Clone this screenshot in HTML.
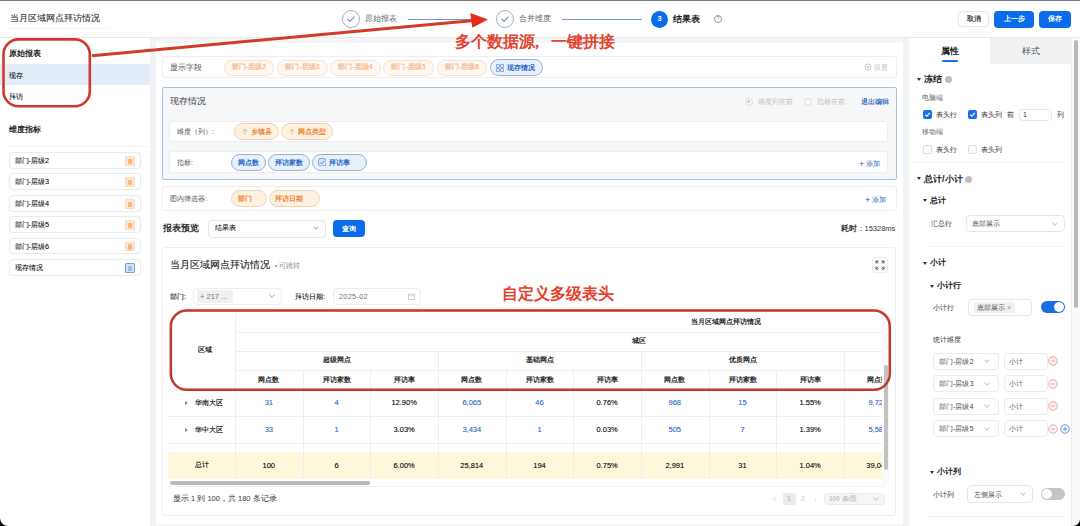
<!DOCTYPE html>
<html><head><meta charset="utf-8">
<style>
*{box-sizing:border-box;margin:0;padding:0}
html,body{width:1080px;height:526px;overflow:hidden;background:#fff}
body{position:relative;font-family:"Liberation Sans",sans-serif;color:#333;font-size:8px;line-height:1}
.a{position:absolute;white-space:nowrap}
.t{position:absolute;white-space:nowrap;line-height:1}
.bar{position:absolute}
.btn{position:absolute;border-radius:4px;color:#fff;font-size:7.4px;display:flex;align-items:center;justify-content:center;font-weight:bold}
.tag{position:absolute;border-radius:9px;display:flex;align-items:center;justify-content:center;font-size:7px;white-space:nowrap}
.tg-o1{background:#fef8f1;border:1px solid #f1e3d6;color:#f4bb90;font-weight:bold;font-size:6.8px}
.tg-o2{background:#fff1e2;border:1px solid #efd3b8;color:#ec883a;font-weight:bold;font-size:7px}
.tg-b{background:#e6f1fd;border:1px solid #9db0c7;color:#2b66c6;font-weight:bold;font-size:7px}
.item{position:absolute;left:9px;width:132px;height:16.5px;border:1px solid #e9ebef;border-radius:4px;background:#fff;box-shadow:0 0 1px rgba(0,0,0,.04)}
.item span{position:absolute;left:4.5px;top:4.3px;font-size:7.3px;color:#2a2a2a;text-shadow:0 0 .5px rgba(0,0,0,.5)}
.item i{position:absolute;right:5.5px;top:3px;width:10px;height:9.5px;background:#fde7d2;border:1px solid #f9dcc0;border-radius:1px}
.item i:after{content:"";position:absolute;left:2px;top:1.5px;width:4.5px;height:5.5px;background:#f3ac70;border-radius:1px;opacity:.8}
.card{position:absolute;border:1px solid #edeef1;border-radius:3px;background:#fff}
.th{position:absolute;font-size:7.1px;font-weight:bold;color:#2a2a2a;text-align:center;line-height:1}
.td{position:absolute;font-size:7.5px;color:#2a2a2a;font-weight:normal;text-shadow:0 0 0.5px rgba(0,0,0,.6);text-align:center;line-height:1}
.td.bl{text-shadow:0 0 0.5px rgba(40,100,190,.7)}
.rn{position:absolute;font-size:7.2px;color:#222;font-weight:normal;text-shadow:0 0 0.5px rgba(0,0,0,.7);white-space:nowrap;line-height:1}
.bl{color:#4a80cc}
.vl{position:absolute;width:1px;background:#eceef1}
.hl{position:absolute;height:1px;background:#eceef1}
.sel{position:absolute;border:1px solid #e4e6ea;border-radius:4px;background:#fff}
.chev{position:absolute;width:4px;height:4px;border-right:1px solid #bbb;border-bottom:1px solid #bbb;transform:rotate(45deg)}
.item i.bi:after{background:#8db2e3}
</style></head><body>

<!-- top dark line -->
<div class="bar" style="left:0;top:0;width:1080px;height:1px;background:#7a7a7a"></div>

<!-- ================= HEADER ================= -->
<div class="t" style="left:9.5px;top:14px;font-size:9px;color:#444;text-shadow:0 0 .4px rgba(0,0,0,.4)">当月区域网点拜访情况</div>
<div class="bar" style="left:8px;top:28px;width:102px;height:1px;background:#f5f5f5"></div>
<div class="bar" style="left:0;top:37px;width:1080px;height:1px;background:#e9e9e9"></div>


<!-- steps -->
<div class="bar" style="left:342px;top:10px;width:18px;height:18px;border:1px solid #9fb3cc;border-radius:50%"></div>
<svg class="a" style="left:345px;top:13px" width="12" height="12" viewBox="0 0 12 12"><path d="M2.6 6 L5 8.4 L9.4 3.6" fill="none" stroke="#7893b5" stroke-width="1.2"/></svg>
<div class="t" style="left:365px;top:15px;font-size:8.2px;color:#666">原始报表</div>
<div class="bar" style="left:408px;top:19px;width:76px;height:1px;background:#7b98bf"></div>
<div class="bar" style="left:496px;top:10px;width:18px;height:18px;border:1px solid #9fb3cc;border-radius:50%"></div>
<svg class="a" style="left:499px;top:13px" width="12" height="12" viewBox="0 0 12 12"><path d="M2.6 6 L5 8.4 L9.4 3.6" fill="none" stroke="#7893b5" stroke-width="1.2"/></svg>
<div class="t" style="left:519px;top:15px;font-size:8.2px;color:#666">合并维度</div>
<div class="bar" style="left:562px;top:19px;width:80px;height:1px;background:#7b98bf"></div>
<div class="bar" style="left:651px;top:10.5px;width:17px;height:17px;background:#0a6cea;border-radius:50%;color:#fff;font-size:7.5px;font-weight:bold;display:flex;align-items:center;justify-content:center">3</div>
<div class="t" style="left:673px;top:14.5px;font-size:9px;font-weight:bold;color:#222">结果表</div>
<div class="bar" style="left:714px;top:15px;width:8px;height:8px;border:1px solid #999;border-radius:50%;font-size:5.5px;color:#888;display:flex;align-items:center;justify-content:center">?</div>

<!-- buttons -->
<div class="btn" style="left:958px;top:11px;width:31px;height:16px;background:#fff;border:1px solid #e8e8e8;color:#444;box-shadow:0 0 2px rgba(0,0,0,.06)">取消</div>
<div class="btn" style="left:994px;top:10.5px;width:40px;height:17px;background:#0a6cea">上一步</div>
<div class="btn" style="left:1039px;top:10.5px;width:32px;height:17px;background:#0a6cea">保存</div>

<!-- ================= LEFT PANEL ================= -->
<div class="bar" style="left:150px;top:38px;width:6px;height:488px;background:#f2f3f5"></div>
<div class="t" style="left:9px;top:49.5px;font-size:7.6px;font-weight:bold;color:#222">原始报表</div>
<div class="bar" style="left:0;top:64px;width:150px;height:21px;background:#e3ecf9"></div>
<div class="t" style="left:9px;top:72px;font-size:7.2px;color:#2a2a2a;text-shadow:0 0 .5px rgba(0,0,0,.5)">现存</div>
<div class="t" style="left:9px;top:93px;font-size:7.2px;color:#2a2a2a;text-shadow:0 0 .5px rgba(0,0,0,.5)">拜访</div>

<div class="t" style="left:9px;top:125.5px;font-size:7.6px;font-weight:bold;color:#222">维度指标</div>
<div class="bar" style="left:8px;top:146px;width:140px;height:1px;background:#f3f3f3"></div>
<div class="item" style="top:152px"><span>部门-层级2</span><i></i></div>
<div class="item" style="top:173px"><span>部门-层级3</span><i></i></div>
<div class="item" style="top:195px"><span>部门-层级4</span><i></i></div>
<div class="item" style="top:216px"><span>部门-层级5</span><i></i></div>
<div class="item" style="top:237.5px"><span>部门-层级6</span><i></i></div>
<div class="item" style="top:259px"><span>现存情况</span><i class="bi" style="background:#d3e4f8;border-color:#7f9fcf"></i></div>


<!-- ================= CENTER ================= -->
<div class="bar" style="left:156px;top:38px;width:747px;height:5px;background:#f4f5f7"></div>
<div class="bar" style="left:902.5px;top:38px;width:6.5px;height:488px;background:#f2f3f5"></div>

<!-- 显示字段 -->
<div class="card" style="left:162px;top:56px;width:735px;height:22px"></div>
<div class="t" style="left:170px;top:63.5px;font-size:7.5px;color:#555">显示字段</div>
<div class="tag tg-o1" style="left:224px;top:59.5px;width:50px;height:16px">部门-层级2</div>
<div class="tag tg-o1" style="left:277px;top:59.5px;width:51px;height:16px">部门-层级3</div>
<div class="tag tg-o1" style="left:330px;top:59.5px;width:51px;height:16px">部门-层级4</div>
<div class="tag tg-o1" style="left:383px;top:59.5px;width:51px;height:16px">部门-层级5</div>
<div class="tag tg-o1" style="left:437px;top:59.5px;width:50px;height:16px">部门-层级6</div>
<div class="tag tg-b" style="left:490px;top:59px;width:53px;height:17px;justify-content:flex-start;padding-left:5px"><svg width="8" height="8" viewBox="0 0 8 8" style="margin-right:3px"><g fill="none" stroke="#5d88cc" stroke-width="0.8"><rect x="0.4" y="0.4" width="3" height="3" rx="0.5"/><rect x="4.6" y="0.4" width="3" height="3" rx="0.5"/><rect x="0.4" y="4.6" width="3" height="3" rx="0.5"/><rect x="4.6" y="4.6" width="3" height="3" rx="0.5"/></g></svg>现存情况</div>
<svg class="a" style="left:864px;top:63px" width="8" height="8" viewBox="0 0 8 8"><circle cx="4" cy="4" r="3" fill="none" stroke="#bbb" stroke-width="0.8"/><circle cx="4" cy="4" r="1" fill="none" stroke="#bbb" stroke-width="0.8"/></svg>
<div class="t" style="left:874px;top:64px;font-size:7px;color:#bbb">设置</div>

<!-- 现存情况 card -->
<div class="bar" style="left:162px;top:87px;width:735px;height:93px;border:1px solid #a9c0dd;background:#f6f7f9;border-radius:2px"></div>
<div class="t" style="left:170px;top:97px;font-size:8.5px;color:#444">现存情况</div>
<div class="bar" style="left:744.5px;top:97.5px;width:8px;height:8px;border:1px solid #ddd;border-radius:50%;background:#fafafa"></div>
<div class="bar" style="left:747px;top:100px;width:3px;height:3px;border-radius:50%;background:#c8c8c8"></div>
<div class="t" style="left:758px;top:97.8px;font-size:7.3px;color:#bdbdbd">维度列在前</div>
<div class="bar" style="left:803.5px;top:97.5px;width:8px;height:8px;border:1px solid #ddd;border-radius:50%;background:#fafafa"></div>
<div class="t" style="left:817px;top:97.8px;font-size:7.3px;color:#bdbdbd">指标在前</div>
<div class="t" style="left:860.5px;top:97.8px;font-size:7.2px;color:#2a64c0;text-shadow:0 0 .5px rgba(30,90,190,.8)">退出编辑</div>

<div class="card" style="left:169px;top:121px;width:719px;height:21px;border-color:#eceef2"></div>
<div class="t" style="left:177px;top:128px;font-size:7px;color:#555">维度（列）:</div>
<div class="tag tg-o2" style="left:234px;top:123px;width:44.5px;height:16.5px"><svg width="6" height="7" viewBox="0 0 6 7" style="margin-right:3px;margin-left:1px"><path d="M3 6.5V1M0.8 3.2L3 1L5.2 3.2" fill="none" stroke="#d9b497" stroke-width="0.9"/></svg>乡镇县</div>
<div class="tag tg-o2" style="left:281px;top:123px;width:52px;height:16.5px"><svg width="6" height="7" viewBox="0 0 6 7" style="margin-right:3px;margin-left:1px"><path d="M3 6.5V1M0.8 3.2L3 1L5.2 3.2" fill="none" stroke="#d9b497" stroke-width="0.9"/></svg>网点类型</div>

<div class="card" style="left:169px;top:151px;width:719px;height:22px;border-color:#eceef2"></div>
<div class="t" style="left:177px;top:158.5px;font-size:7px;color:#555">指标:</div>
<div class="tag tg-b" style="left:231px;top:153.5px;width:35px;height:17px">网点数</div>
<div class="tag tg-b" style="left:268px;top:153.5px;width:42px;height:17px">拜访家数</div>
<div class="tag tg-b" style="left:312px;top:153.5px;width:55px;height:17px;justify-content:flex-start;padding-left:4.5px"><svg width="8.5" height="8.5" viewBox="0 0 8.5 8.5" style="margin-right:3px"><rect x="0.5" y="0.5" width="7.5" height="7.5" rx="2.2" fill="#d6e6fa" stroke="#6f93c9" stroke-width="0.9"/><path d="M2.3 4.4L3.8 5.8L6.3 2.8" fill="none" stroke="#4a78c0" stroke-width="0.9"/></svg>拜访率</div>
<div class="t" style="left:859px;top:159px;font-size:7.2px;color:#2a63b8"><b style="font-weight:normal;font-size:9px;position:relative;top:1px">+</b> 添加</div>

<!-- 图内筛选器 -->
<div class="card" style="left:162px;top:186px;width:735px;height:25px"></div>
<div class="t" style="left:170px;top:194.5px;font-size:7px;color:#555">图内筛选器:</div>
<div class="tag tg-o2" style="left:231px;top:190px;width:36px;height:17px;justify-content:flex-start;padding-left:5.5px">部门</div>
<div class="tag tg-o2" style="left:269px;top:190px;width:51px;height:17px;justify-content:flex-start;padding-left:5px">拜访日期</div>
<div class="t" style="left:865px;top:195px;font-size:7.2px;color:#2a63b8"><b style="font-weight:normal;font-size:9px;position:relative;top:1px">+</b> 添加</div>

<!-- 报表预览 -->
<div class="t" style="left:163px;top:223.5px;font-size:9px;font-weight:bold;color:#333">报表预览</div>
<div class="sel" style="left:207.5px;top:219.5px;width:118px;height:18px"></div>
<div class="t" style="left:214.5px;top:224.3px;font-size:7.3px;color:#333;text-shadow:0 0 .4px rgba(0,0,0,.5)">结果表</div>
<div class="chev" style="left:314px;top:225px"></div>
<div class="btn" style="left:332.5px;top:220px;width:32.5px;height:17px;background:#0a6cea;font-size:7px">查询</div>
<div class="t" style="left:840.5px;top:224.5px;font-size:7.5px;color:#333"><b>耗时</b>：15328ms</div>


<!-- report card -->
<div class="card" style="left:162px;top:247px;width:734px;height:269px"></div>
<div class="t" style="left:170px;top:260px;font-size:10px;color:#333;text-shadow:0 0 .5px rgba(0,0,0,.5)">当月区域网点拜访情况</div>
<div class="t" style="left:275px;top:262.5px;font-size:6.5px;color:#888">• 可跳转</div>
<div class="bar" style="left:872px;top:256.5px;width:16px;height:16px;border:1px solid #ececec;border-radius:3px"></div>
<svg class="a" style="left:874px;top:258.5px" width="12" height="12" viewBox="0 0 12 12"><g fill="none" stroke="#555" stroke-width="1"><path d="M2 4.5V2H4.5M2 2L4.3 4.3"/><path d="M7.5 2H10V4.5M10 2L7.7 4.3"/><path d="M10 7.5V10H7.5M10 10L7.7 7.7"/><path d="M4.5 10H2V7.5M2 10L4.3 7.7"/></g></svg>

<div class="t" style="left:170px;top:293px;font-size:7px;color:#333;text-shadow:0 0 .5px rgba(0,0,0,.6)">部门:</div>
<div class="sel" style="left:192.5px;top:288px;width:89px;height:16.5px;border-color:#ececec"></div>
<div class="bar" style="left:196.5px;top:290px;width:36px;height:12.5px;background:#f0f0f0;border-radius:2px"></div>
<div class="t" style="left:200px;top:292.5px;font-size:7.5px;color:#777">+ 217 ...</div>
<div class="chev" style="left:270px;top:293px"></div>
<div class="t" style="left:295px;top:293px;font-size:7px;color:#333;text-shadow:0 0 .5px rgba(0,0,0,.6)">拜访日期:</div>
<div class="sel" style="left:332.5px;top:288px;width:88px;height:16.5px;border-color:#ececec"></div>
<div class="t" style="left:339px;top:292.5px;font-size:7.5px;color:#777;letter-spacing:0.2px">2025-02</div>
<svg class="a" style="left:408px;top:292.5px" width="7" height="7" viewBox="0 0 7 7"><rect x="0.5" y="1" width="6" height="5.5" fill="none" stroke="#c8c8c8" stroke-width="0.8"/><path d="M0.5 2.8H6.5" stroke="#c8c8c8" stroke-width="0.8"/></svg>

<!-- TABLE -->
<div class="bar" style="left:168px;top:312px;width:714px;height:174px;overflow:hidden">
<div class="bar" style="left:0;top:139.5px;width:716px;height:27px;background:#fdf7dc"></div>
<div class="hl" style="left:67.0px;top:19.7px;width:649.0px"></div>
<div class="hl" style="left:67.0px;top:39.0px;width:649.0px"></div>
<div class="hl" style="left:67.0px;top:58.2px;width:649.0px"></div>
<div class="hl" style="left:0.0px;top:77.5px;width:716.0px"></div>
<div class="hl" style="left:0.0px;top:104.3px;width:716.0px"></div>
<div class="hl" style="left:0.0px;top:131.0px;width:716.0px"></div>
<div class="vl" style="left:67.0px;top:0.0px;height:167.0px"></div>
<div class="vl" style="left:134.7px;top:58.0px;height:109.0px"></div>
<div class="vl" style="left:202.3px;top:58.0px;height:109.0px"></div>
<div class="vl" style="left:270.0px;top:39.0px;height:128.0px"></div>
<div class="vl" style="left:337.6px;top:58.0px;height:109.0px"></div>
<div class="vl" style="left:405.3px;top:58.0px;height:109.0px"></div>
<div class="vl" style="left:473.0px;top:39.0px;height:128.0px"></div>
<div class="vl" style="left:540.6px;top:58.0px;height:109.0px"></div>
<div class="vl" style="left:608.3px;top:58.0px;height:109.0px"></div>
<div class="vl" style="left:675.9px;top:39.0px;height:128.0px"></div>
<div class="vl" style="left:743.6px;top:58.0px;height:109.0px"></div>
<div class="th" style="left:-3.3px;width:80px;top:35.0px;">区域</div>
<div class="th" style="left:498.4px;width:120px;top:6.7px;">当月区域网点拜访情况</div>
<div class="th" style="left:430.9px;width:80px;top:25.5px;">城区</div>
<div class="th" style="left:128.5px;width:80px;top:44.5px;">超级网点</div>
<div class="th" style="left:331.5px;width:80px;top:44.5px;">基础网点</div>
<div class="th" style="left:534.5px;width:80px;top:44.5px;">优质网点</div>
<div class="th" style="left:60.8px;width:80px;top:64.7px;">网点数</div>
<div class="th" style="left:128.5px;width:80px;top:64.7px;">拜访家数</div>
<div class="th" style="left:196.1px;width:80px;top:64.7px;">拜访率</div>
<div class="th" style="left:263.8px;width:80px;top:64.7px;">网点数</div>
<div class="th" style="left:331.5px;width:80px;top:64.7px;">拜访家数</div>
<div class="th" style="left:399.1px;width:80px;top:64.7px;">拜访率</div>
<div class="th" style="left:466.8px;width:80px;top:64.7px;">网点数</div>
<div class="th" style="left:534.5px;width:80px;top:64.7px;">拜访家数</div>
<div class="th" style="left:602.1px;width:80px;top:64.7px;">拜访率</div>
<div class="th" style="left:669.8px;width:80px;top:64.7px;">网点数</div>
<div class="bar" style="left:17px;top:89.19999999999999px;width:0;height:0;border-left:3px solid #888;border-top:2px solid transparent;border-bottom:2px solid transparent"></div>
<div class="rn" style="left:27px;top:87.19999999999999px">华南大区</div>
<div class="td bl" style="left:60.8px;width:80px;top:87.2px;">31</div>
<div class="td bl" style="left:128.5px;width:80px;top:87.2px;">4</div>
<div class="td" style="left:196.1px;width:80px;top:87.2px;">12.90%</div>
<div class="td bl" style="left:263.8px;width:80px;top:87.2px;">6,065</div>
<div class="td bl" style="left:331.5px;width:80px;top:87.2px;">46</div>
<div class="td" style="left:399.1px;width:80px;top:87.2px;">0.76%</div>
<div class="td bl" style="left:466.8px;width:80px;top:87.2px;">968</div>
<div class="td bl" style="left:534.5px;width:80px;top:87.2px;">15</div>
<div class="td" style="left:602.1px;width:80px;top:87.2px;">1.55%</div>
<div class="td bl" style="left:669.8px;width:80px;top:87.2px;">9,726</div>
<div class="bar" style="left:17px;top:116.09999999999997px;width:0;height:0;border-left:3px solid #888;border-top:2px solid transparent;border-bottom:2px solid transparent"></div>
<div class="rn" style="left:27px;top:114.09999999999997px">华中大区</div>
<div class="td bl" style="left:60.8px;width:80px;top:114.1px;">33</div>
<div class="td bl" style="left:128.5px;width:80px;top:114.1px;">1</div>
<div class="td" style="left:196.1px;width:80px;top:114.1px;">3.03%</div>
<div class="td bl" style="left:263.8px;width:80px;top:114.1px;">3,434</div>
<div class="td bl" style="left:331.5px;width:80px;top:114.1px;">1</div>
<div class="td" style="left:399.1px;width:80px;top:114.1px;">0.03%</div>
<div class="td bl" style="left:466.8px;width:80px;top:114.1px;">505</div>
<div class="td bl" style="left:534.5px;width:80px;top:114.1px;">7</div>
<div class="td" style="left:602.1px;width:80px;top:114.1px;">1.39%</div>
<div class="td bl" style="left:669.8px;width:80px;top:114.1px;">5,583</div>
<div class="rn" style="left:27px;top:149.3px">总计</div>
<div class="td" style="left:60.8px;width:80px;top:149.6px;">100</div>
<div class="td" style="left:128.5px;width:80px;top:149.6px;">6</div>
<div class="td" style="left:196.1px;width:80px;top:149.6px;">6.00%</div>
<div class="td" style="left:263.8px;width:80px;top:149.6px;">25,814</div>
<div class="td" style="left:331.5px;width:80px;top:149.6px;">194</div>
<div class="td" style="left:399.1px;width:80px;top:149.6px;">0.75%</div>
<div class="td" style="left:466.8px;width:80px;top:149.6px;">2,991</div>
<div class="td" style="left:534.5px;width:80px;top:149.6px;">31</div>
<div class="td" style="left:602.1px;width:80px;top:149.6px;">1.04%</div>
<div class="td" style="left:669.8px;width:80px;top:149.6px;">39,042</div>
</div>
<!-- scrollbars -->
<div class="bar" style="left:882px;top:312px;width:7px;height:174px;background:#fafafa"></div>
<div class="bar" style="left:883.8px;top:365px;width:4.2px;height:105px;background:#c2c2c2;border-radius:2px"></div>
<div class="bar" style="left:170px;top:481px;width:200px;height:4px;background:#b9b9b9;border-radius:2px"></div>
<div class="bar" style="left:168px;top:486px;width:716px;height:1px;background:#f0f0f0"></div>

<div class="t" style="left:173px;top:494.5px;font-size:7.5px;color:#3a3a3a">显示 1 到 100，共 180 条记录</div>
<div class="t" style="left:773px;top:494.5px;font-size:9px;color:#d8d8d8">‹</div>
<div class="bar" style="left:782.5px;top:492.5px;width:13px;height:12px;background:#ebebeb;border-radius:2px;font-size:7px;color:#aaa;display:flex;align-items:center;justify-content:center">1</div>
<div class="t" style="left:801px;top:495px;font-size:7px;color:#ccc">2</div>
<div class="t" style="left:814px;top:494.5px;font-size:9px;color:#d8d8d8">›</div>
<div class="sel" style="left:824px;top:492.5px;width:61px;height:12.5px;background:#f6f6f6;border-color:#ebebeb"></div>
<div class="t" style="left:829px;top:495.5px;font-size:6.5px;color:#c4c4c4;font-weight:bold">100 条/页</div>
<div class="chev" style="left:874px;top:496px;border-color:#ccc"></div>
<div class="bar" style="left:156px;top:523.5px;width:747px;height:3px;background:#f5f6f7"></div>


<!-- ================= RIGHT PANEL ================= -->
<div class="bar" style="left:990px;top:38px;width:82px;height:25.5px;background:#f0f1f3"></div>
<div class="t" style="left:940.5px;top:46.5px;font-size:9px;font-weight:bold;color:#222">属性</div>
<div class="bar" style="left:941.5px;top:60px;width:16px;height:2px;background:#1a6ee6;border-radius:1px"></div>
<div class="t" style="left:1021.5px;top:46.5px;font-size:9px;color:#555">样式</div>

<div class="bar" style="left:916.5px;top:78px;width:0;height:0;border-top:3px solid #333;border-left:2px solid transparent;border-right:2px solid transparent"></div>
<div class="t" style="left:923.5px;top:75px;font-size:9px;font-weight:bold;color:#222">冻结</div>
<div class="bar" style="left:945px;top:75.5px;width:7px;height:7px;border-radius:50%;background:#bdbdbd"></div>
<div class="t" style="left:922px;top:94.5px;font-size:6.5px;color:#666">电脑端</div>
<div class="bar" style="left:922.5px;top:110px;width:9px;height:9px;border-radius:2px;background:#1a6ee6"></div>
<svg class="a" style="left:922.5px;top:110px" width="9" height="9" viewBox="0 0 9 9"><path d="M2.2 4.6L3.9 6.2L6.9 2.9" fill="none" stroke="#fff" stroke-width="1.1"/></svg>
<div class="t" style="left:936px;top:110.5px;font-size:7px;color:#333">表头行</div>
<div class="bar" style="left:967.5px;top:110px;width:9px;height:9px;border-radius:2px;background:#1a6ee6"></div>
<svg class="a" style="left:967.5px;top:110px" width="9" height="9" viewBox="0 0 9 9"><path d="M2.2 4.6L3.9 6.2L6.9 2.9" fill="none" stroke="#fff" stroke-width="1.1"/></svg>
<div class="t" style="left:981px;top:110.5px;font-size:7px;color:#333">表头列</div>
<div class="t" style="left:1007px;top:110.5px;font-size:7px;color:#333">前</div>
<div class="sel" style="left:1019px;top:108.5px;width:33px;height:12.5px"></div>
<div class="t" style="left:1023px;top:111px;font-size:7px;color:#333">1</div>
<div class="t" style="left:1057px;top:110.5px;font-size:7px;color:#333">列</div>
<div class="t" style="left:922px;top:129px;font-size:6.5px;color:#666">移动端</div>
<div class="bar" style="left:922.5px;top:145px;width:9px;height:9px;border-radius:2px;border:1px solid #ddd"></div>
<div class="t" style="left:936px;top:145.5px;font-size:7px;color:#333">表头行</div>
<div class="bar" style="left:967.5px;top:145px;width:9px;height:9px;border-radius:2px;border:1px solid #ddd"></div>
<div class="t" style="left:981px;top:145.5px;font-size:7px;color:#333">表头列</div>
<div class="bar" style="left:913px;top:162px;width:152px;height:1px;background:#f0f0f0"></div>

<div class="bar" style="left:917px;top:177px;width:0;height:0;border-top:3px solid #333;border-left:2px solid transparent;border-right:2px solid transparent"></div>
<div class="t" style="left:924px;top:175px;font-size:9px;font-weight:bold;color:#222">总计/小计</div>
<div class="bar" style="left:965px;top:175.5px;width:7px;height:7px;border-radius:50%;background:#bdbdbd"></div>
<div class="bar" style="left:923px;top:199px;width:0;height:0;border-top:3px solid #333;border-left:2px solid transparent;border-right:2px solid transparent"></div>
<div class="t" style="left:929.5px;top:197px;font-size:8px;font-weight:bold;color:#222">总计</div>
<div class="t" style="left:931px;top:220px;font-size:7px;color:#333">汇总行</div>
<div class="sel" style="left:966px;top:214.5px;width:99px;height:17.5px"></div>
<div class="t" style="left:972px;top:220px;font-size:7px;color:#555">底部展示</div>
<div class="chev" style="left:1053px;top:220.5px;border-color:#ccc"></div>
<div class="bar" style="left:930px;top:246px;width:135px;height:1px;background:#f0f0f0"></div>

<div class="bar" style="left:923px;top:261.5px;width:0;height:0;border-top:3px solid #333;border-left:2px solid transparent;border-right:2px solid transparent"></div>
<div class="t" style="left:929.5px;top:259px;font-size:8px;font-weight:bold;color:#222">小计</div>
<div class="bar" style="left:930px;top:284.5px;width:0;height:0;border-top:3px solid #333;border-left:2px solid transparent;border-right:2px solid transparent"></div>
<div class="t" style="left:936.5px;top:282px;font-size:8px;font-weight:bold;color:#222">小计行</div>
<div class="t" style="left:933px;top:303.5px;font-size:7px;color:#333">小计行</div>
<div class="sel" style="left:968px;top:299px;width:64px;height:16.5px"></div>
<div class="bar" style="left:974px;top:301.5px;width:41px;height:11.5px;background:#f0f0f0;border-radius:2px"></div>
<div class="t" style="left:977px;top:304px;font-size:7px;color:#555">底部展示 <span style="color:#999">×</span></div>
<div class="bar" style="left:1040.5px;top:301px;width:24px;height:12px;border-radius:6px;background:#1a6ee6"></div>
<div class="bar" style="left:1053.5px;top:302px;width:10px;height:10px;border-radius:50%;background:#fff"></div>
<div class="t" style="left:933px;top:335.5px;font-size:7px;color:#333">统计维度</div>
<div class="sel" style="left:932.5px;top:352.7px;width:66px;height:17px;border-color:#ebebeb"></div>
<div class="t" style="left:939px;top:357.7px;font-size:7.4px;color:#4a4a4a">部门-层级2</div>
<div class="chev" style="left:985px;top:358.2px;border-color:#ccc"></div>
<div class="sel" style="left:1004px;top:352.7px;width:43.5px;height:17px;border-color:#ebebeb"></div>
<div class="t" style="left:1009px;top:357.7px;font-size:7px;color:#666">小计</div>
<svg class="a" style="left:1048.3px;top:356.3px" width="10" height="10" viewBox="0 0 10 10"><circle cx="5" cy="5" r="4.3" fill="#fdf0f0" stroke="#eca0a0" stroke-width="0.9"/><path d="M3 5H7" stroke="#ee9a9a" stroke-width="0.9"/></svg>
<div class="sel" style="left:932.5px;top:375.2px;width:66px;height:17px;border-color:#ebebeb"></div>
<div class="t" style="left:939px;top:380.2px;font-size:7.4px;color:#4a4a4a">部门-层级3</div>
<div class="chev" style="left:985px;top:380.7px;border-color:#ccc"></div>
<div class="sel" style="left:1004px;top:375.2px;width:43.5px;height:17px;border-color:#ebebeb"></div>
<div class="t" style="left:1009px;top:380.2px;font-size:7px;color:#666">小计</div>
<svg class="a" style="left:1048.3px;top:378.8px" width="10" height="10" viewBox="0 0 10 10"><circle cx="5" cy="5" r="4.3" fill="#fdf0f0" stroke="#eca0a0" stroke-width="0.9"/><path d="M3 5H7" stroke="#ee9a9a" stroke-width="0.9"/></svg>
<div class="sel" style="left:932.5px;top:397.7px;width:66px;height:17px;border-color:#ebebeb"></div>
<div class="t" style="left:939px;top:402.7px;font-size:7.4px;color:#4a4a4a">部门-层级4</div>
<div class="chev" style="left:985px;top:403.2px;border-color:#ccc"></div>
<div class="sel" style="left:1004px;top:397.7px;width:43.5px;height:17px;border-color:#ebebeb"></div>
<div class="t" style="left:1009px;top:402.7px;font-size:7px;color:#666">小计</div>
<svg class="a" style="left:1048.3px;top:401.3px" width="10" height="10" viewBox="0 0 10 10"><circle cx="5" cy="5" r="4.3" fill="#fdf0f0" stroke="#eca0a0" stroke-width="0.9"/><path d="M3 5H7" stroke="#ee9a9a" stroke-width="0.9"/></svg>
<div class="sel" style="left:932.5px;top:420.2px;width:66px;height:17px;border-color:#ebebeb"></div>
<div class="t" style="left:939px;top:425.2px;font-size:7.4px;color:#4a4a4a">部门-层级5</div>
<div class="chev" style="left:985px;top:425.7px;border-color:#ccc"></div>
<div class="sel" style="left:1004px;top:420.2px;width:43.5px;height:17px;border-color:#ebebeb"></div>
<div class="t" style="left:1009px;top:425.2px;font-size:7px;color:#666">小计</div>
<svg class="a" style="left:1048.3px;top:423.8px" width="10" height="10" viewBox="0 0 10 10"><circle cx="5" cy="5" r="4.3" fill="#fdf0f0" stroke="#eca0a0" stroke-width="0.9"/><path d="M3 5H7" stroke="#ee9a9a" stroke-width="0.9"/></svg>
<svg class="a" style="left:1060px;top:423.8px" width="10" height="10" viewBox="0 0 10 10"><circle cx="5" cy="5" r="4.3" fill="#eaf3fd" stroke="#5b95e0" stroke-width="0.9"/><path d="M3 5H7M5 3V7" stroke="#5b95e0" stroke-width="0.9"/></svg>

<div class="bar" style="left:930px;top:470.5px;width:0;height:0;border-top:3px solid #333;border-left:2px solid transparent;border-right:2px solid transparent"></div>
<div class="t" style="left:936.5px;top:467.5px;font-size:8px;font-weight:bold;color:#222">小计列</div>
<div class="t" style="left:933px;top:490.5px;font-size:7px;color:#333">小计列</div>
<div class="sel" style="left:967px;top:485px;width:66px;height:18px"></div>
<div class="t" style="left:974px;top:490.5px;font-size:7px;color:#555">左侧展示</div>
<div class="chev" style="left:1021px;top:491px;border-color:#ccc"></div>
<div class="bar" style="left:1040.5px;top:488px;width:24.5px;height:12px;border-radius:6px;background:#c4c4c4"></div>
<div class="bar" style="left:1041.5px;top:489px;width:10px;height:10px;border-radius:50%;background:#fff"></div>
<div class="bar" style="left:930px;top:516px;width:135px;height:1px;background:#f0f0f0"></div>

<div class="bar" style="left:1071px;top:63.5px;width:1px;height:463px;background:#efefef"></div>
<div class="bar" style="left:1072px;top:38px;width:8px;height:488px;background:#fafafa"></div>
<div class="bar" style="left:1074px;top:40px;width:4px;height:268px;background:#b8b8b8;border-radius:2px"></div>
<svg class="a" style="left:0;top:516px" width="10" height="10" viewBox="0 0 10 10"><path d="M0 2 A8 8 0 0 0 8 10 L0 10 Z" fill="#000"/></svg>
<svg class="a" style="left:1070px;top:516px" width="10" height="10" viewBox="0 0 10 10"><path d="M10 3 A7 7 0 0 1 3 10 L10 10 Z" fill="#000"/></svg>
<!-- ================= ANNOTATIONS ================= -->
<svg class="a" style="left:0;top:0" width="1080" height="526" viewBox="0 0 1080 526">
<rect x="3.5" y="39.4" width="86.3" height="66.8" rx="15" ry="15" fill="none" stroke="#cf392c" stroke-width="2.6"/>
<rect x="170.8" y="310.4" width="719" height="79.3" rx="16" ry="16" fill="none" stroke="#c0392b" stroke-width="2.5"/>
<path d="M92 55.8 L474 20.4" stroke="#d23a2b" stroke-width="3" fill="none"/>
<path d="M488 19.4 L470.3 13 L472.3 27.8 Z" fill="#e52a1e"/>
</svg>
<div class="t" style="left:455px;top:33.5px;font-size:16px;font-weight:bold;color:#e4432f">多个数据源<span style="position:relative;left:-6px">，</span>一键拼接</div>
<div class="t" style="left:502px;top:286px;font-size:16px;font-weight:bold;color:#e4432f">自定义多级表头</div>
</body></html>
